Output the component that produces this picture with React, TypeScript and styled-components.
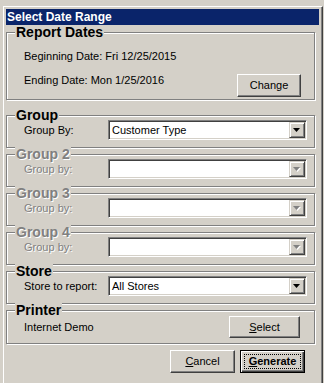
import styled, { createGlobalStyle } from "styled-components";

const GlobalStyle = createGlobalStyle`
  html, body {
    margin: 0;
    padding: 0;
    background: #d4d0c8;
  }
  body {
    width: 324px;
    height: 383px;
    overflow: hidden;
    font-family: "Liberation Sans", Arial, sans-serif;
    font-size: 11px;
    color: #000;
  }
`;

const Window = styled.div`
  box-sizing: border-box;
  width: 320px;
  height: 377px;
  margin: 6px 0 0 3px;
  border-top: 1px solid #fff;
  border-left: 1px solid #fff;
  border-right: 1px solid #404040;
  box-shadow: inset -1px 0 0 #808080;
  padding: 2px 3px 0 2px;
`;

const TitleBar = styled.div`
  height: 16px;
  line-height: 16px;
  padding-left: 1px;
  background: #0a246a;
  color: #fff;
  font-weight: bold;
  font-size: 12px;
  white-space: nowrap;
`;

const Client = styled.div`
  display: flex;
  flex-direction: column;
  padding-right: 4px;
`;

const GroupBox = styled.div<{ $mt: number; $pb: number }>`
  display: flex;
  flex-direction: column;
  margin-top: ${({ $mt }) => $mt}px;
  padding-bottom: ${({ $pb }) => $pb}px;
  border: 1px solid #808080;
  box-shadow: inset 1px 1px 0 #fff, 1px 1px 0 #fff;
`;

const Legend = styled.div<{ $disabled?: boolean }>`
  align-self: flex-start;
  height: 14px;
  line-height: 14px;
  margin: -8px 0 0 8px;
  padding: 0 1px;
  background: #d4d0c8;
  font-weight: bold;
  font-size: 14px;
  color: ${({ $disabled }) => ($disabled ? "#808080" : "#000")};
  text-shadow: ${({ $disabled }) => ($disabled ? "1px 1px 0 #fff" : "none")};
`;

const Text = styled.div<{ $disabled?: boolean }>`
  line-height: 13px;
  white-space: nowrap;
  color: ${({ $disabled }) => ($disabled ? "#808080" : "#000")};
  text-shadow: ${({ $disabled }) => ($disabled ? "1px 1px 0 #fff" : "none")};
`;

const DateLine = styled.div`
  margin-top: 11px;
  padding-left: 17px;
`;

const DateRow = styled.div`
  display: flex;
  justify-content: space-between;
  align-items: flex-start;
  margin-top: 11px;
  padding: 0 13px 0 17px;
`;

const FieldRow = styled.div<{ $mt: number; $pr: number }>`
  display: flex;
  align-items: center;
  justify-content: space-between;
  margin-top: ${({ $mt }) => $mt}px;
  padding: 0 ${({ $pr }) => $pr}px 0 17px;
`;

const FieldLabel = styled(Text)`
  width: 84px;
`;

const Combo = styled.div`
  box-sizing: border-box;
  display: flex;
  align-items: center;
  width: 199px;
  height: 20px;
  padding: 1px;
  background: #fff;
  border: 1px solid;
  border-color: #808080 #fff #fff #808080;
  box-shadow: inset 1px 1px 0 #404040, inset -1px -1px 0 #d4d0c8;
`;

const ComboValue = styled.div`
  flex: 1;
  padding-left: 2px;
  line-height: 13px;
  white-space: nowrap;
`;

const DropButton = styled.div`
  box-sizing: border-box;
  display: flex;
  align-items: center;
  justify-content: center;
  width: 16px;
  height: 16px;
  background: #d4d0c8;
  border: 1px solid;
  border-color: #d4d0c8 #404040 #404040 #d4d0c8;
  box-shadow: inset 1px 1px 0 #fff, inset -1px -1px 0 #808080;
`;

const Button = styled.button<{ $w: number; $h: number; $default?: boolean }>`
  box-sizing: border-box;
  display: flex;
  align-items: stretch;
  width: ${({ $w }) => $w}px;
  height: ${({ $h }) => $h}px;
  padding: ${({ $default }) => ($default ? "3px" : "0")};
  background: #d4d0c8;
  font-family: "Liberation Sans", Arial, sans-serif;
  font-size: 11px;
  font-weight: ${({ $default }) => ($default ? "bold" : "normal")};
  color: #000;
  border: 1px solid;
  border-color: ${({ $default }) =>
    $default ? "#000" : "#fff #404040 #404040 #fff"};
  box-shadow: ${({ $default }) =>
    $default
      ? "inset 1px 1px 0 #fff, inset -1px -1px 0 #404040, inset -2px -2px 0 #808080"
      : "inset -1px -1px 0 #808080"};
`;

const ButtonFace = styled.span<{ $focus?: boolean }>`
  flex: 1;
  display: flex;
  align-items: center;
  justify-content: center;
  border: 1px dotted ${({ $focus }) => ($focus ? "#000" : "transparent")};
  line-height: 13px;
`;

const Key = styled.span`
  text-decoration: underline;
`;

const ButtonBar = styled.div`
  display: flex;
  justify-content: flex-end;
  gap: 5px;
  margin-top: 6px;
  padding-right: 10px;
`;

const Arrow = ({ disabled }: { disabled?: boolean }) => (
  <svg width="8" height="5" viewBox="0 0 8 5">
    {disabled && <polygon points="1,1 8,1 4.5,5" fill="#fff" />}
    <polygon points="0,0 7,0 3.5,4" fill={disabled ? "#808080" : "#000"} />
  </svg>
);

interface GroupI {
  title: string;
  label: string;
  value: string;
  disabled: boolean;
}

const groups: GroupI[] = [
  { title: "Group", label: "Group By:", value: "Customer Type", disabled: false },
  { title: "Group 2", label: "Group by:", value: "", disabled: true },
  { title: "Group 3", label: "Group by:", value: "", disabled: true },
  { title: "Group 4", label: "Group by:", value: "", disabled: true },
  { title: "Store", label: "Store to report:", value: "All Stores", disabled: false },
];

const App = () => {
  return (
    <>
      <GlobalStyle />
      <Window>
        <TitleBar>Select Date Range</TitleBar>
        <Client>
          <GroupBox $mt={7} $pb={2}>
            <Legend>Report Dates</Legend>
            <DateLine>
              <Text>Beginning Date: Fri 12/25/2015</Text>
            </DateLine>
            <DateRow>
              <Text>Ending Date: Mon 1/25/2016</Text>
              <Button $w={64} $h={23}>
                <ButtonFace>Change</ButtonFace>
              </Button>
            </DateRow>
          </GroupBox>

          {groups.map((group, key) => (
            <GroupBox key={key} $mt={key === 0 ? 15 : 6} $pb={7}>
              <Legend $disabled={group.disabled}>{group.title}</Legend>
              <FieldRow $mt={-2} $pr={7}>
                <FieldLabel $disabled={group.disabled}>{group.label}</FieldLabel>
                <Combo>
                  <ComboValue>{group.value}</ComboValue>
                  <DropButton>
                    <Arrow disabled={group.disabled} />
                  </DropButton>
                </Combo>
              </FieldRow>
            </GroupBox>
          ))}

          <GroupBox $mt={6} $pb={5}>
            <Legend>Printer</Legend>
            <FieldRow $mt={-1} $pr={14}>
              <Text>Internet Demo</Text>
              <Button $w={71} $h={22}>
                <ButtonFace>
                  <Key>S</Key>elect
                </ButtonFace>
              </Button>
            </FieldRow>
          </GroupBox>

          <ButtonBar>
            <Button $w={65} $h={23}>
              <ButtonFace>
                <Key>C</Key>ancel
              </ButtonFace>
            </Button>
            <Button $w={65} $h={23} $default>
              <ButtonFace $focus>
                <Key>G</Key>enerate
              </ButtonFace>
            </Button>
          </ButtonBar>
        </Client>
      </Window>
    </>
  );
};

export default App;
